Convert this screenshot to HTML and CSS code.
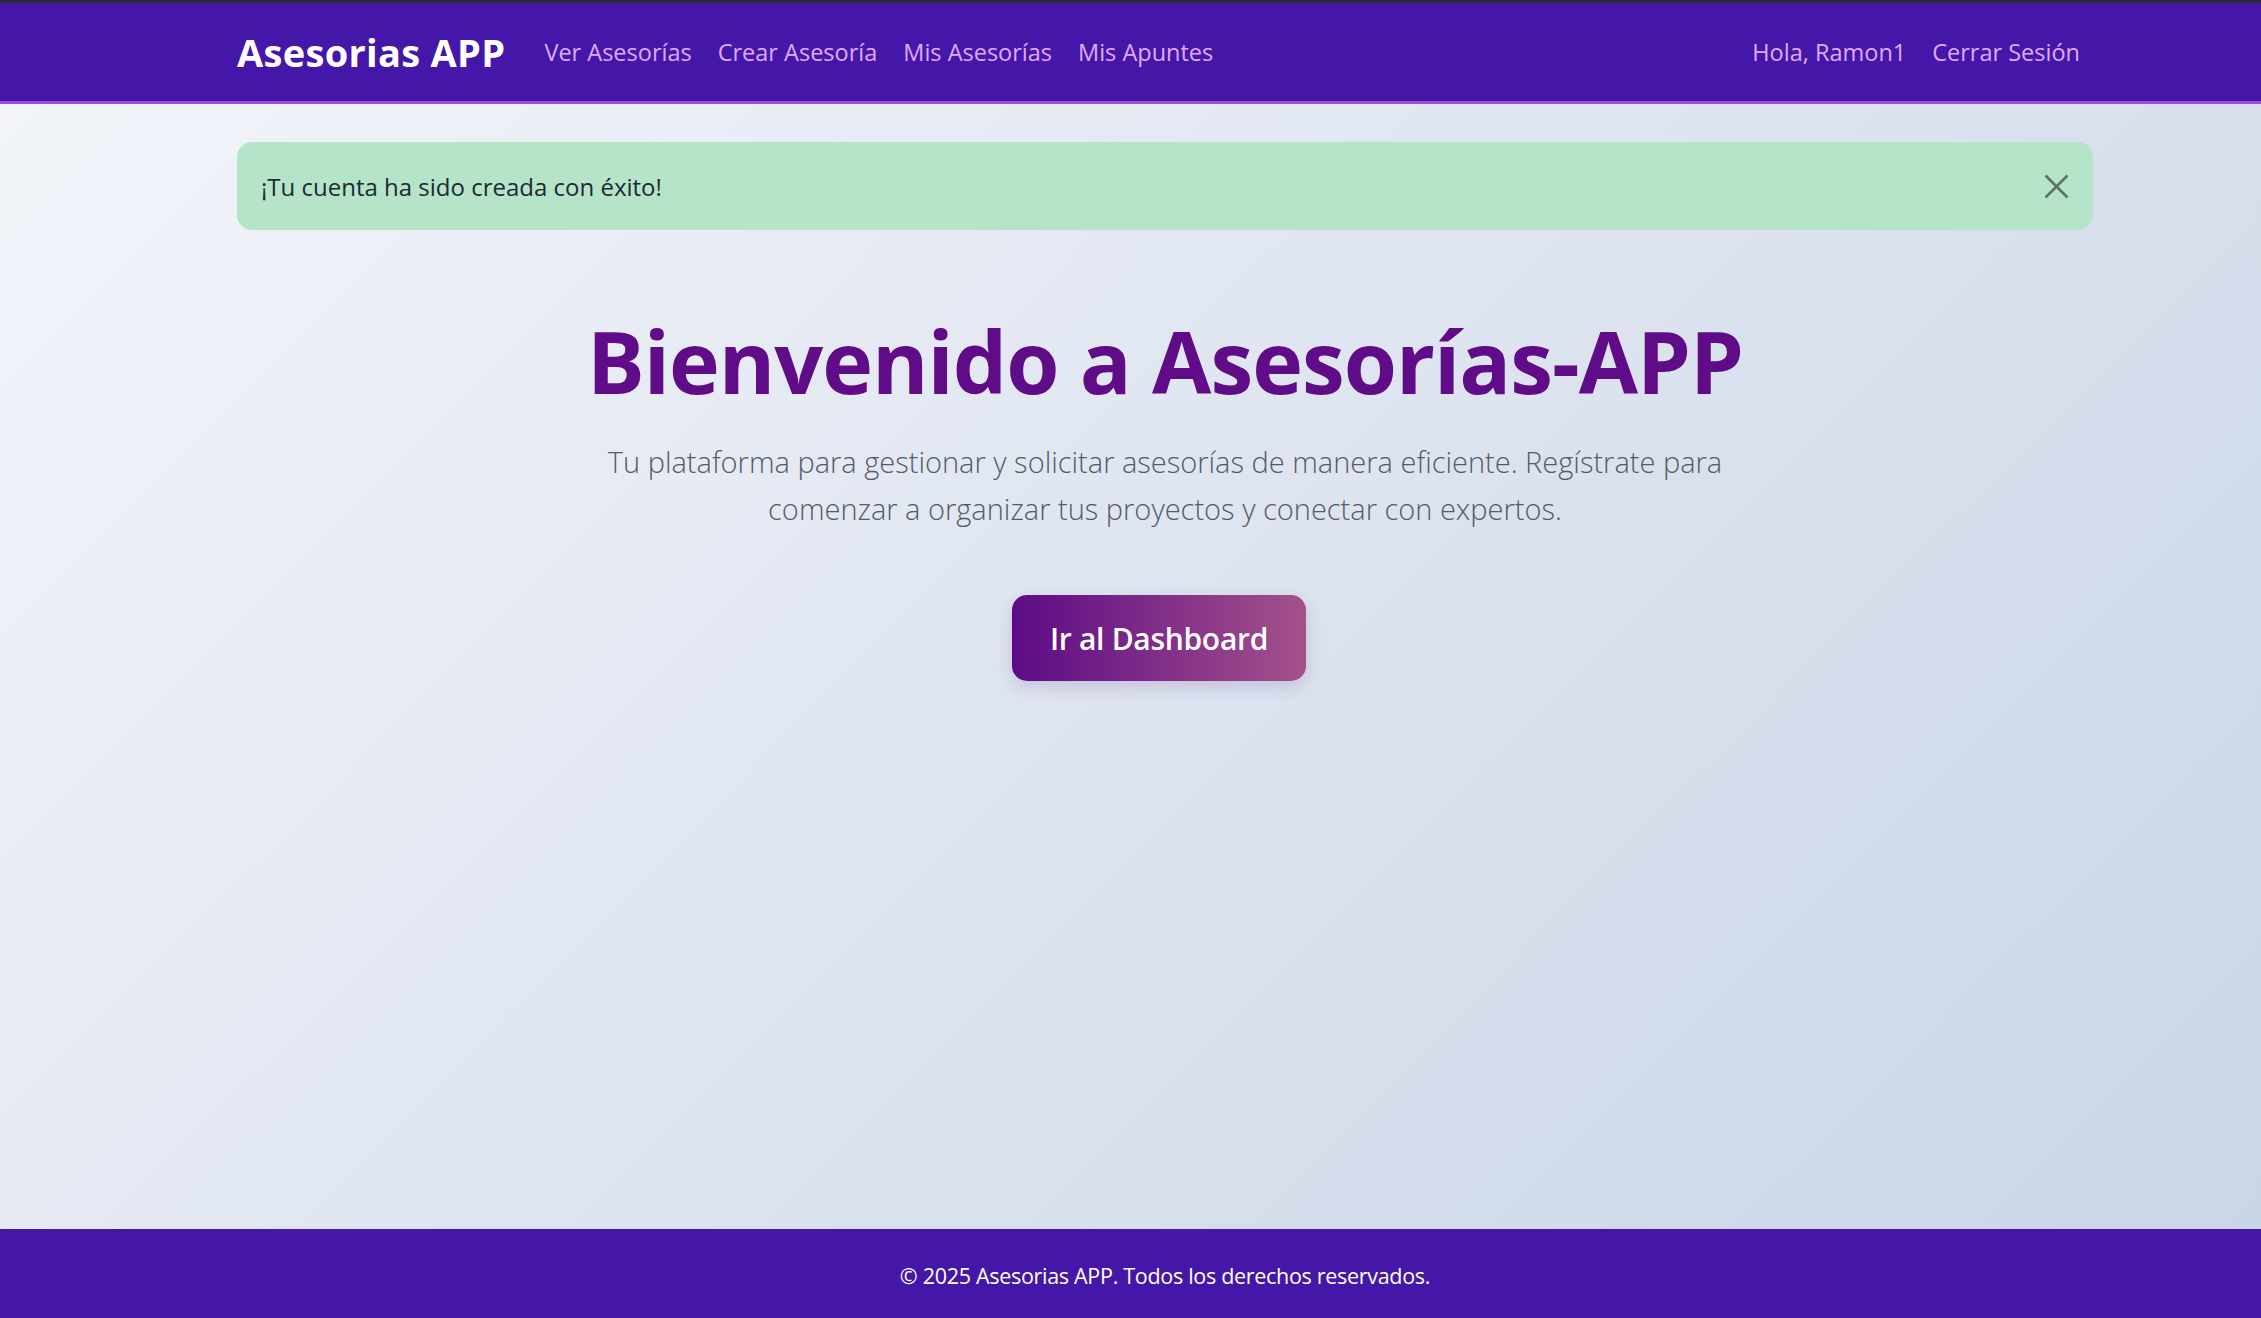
FILE: index.html
```html
<!DOCTYPE html>
<html lang="es">
<head>
<meta charset="utf-8">
<title>Asesorias APP</title>
<link rel="stylesheet" href="styles.css">
</head>
<body>
<header class="navbar">
  <div class="shift">
    <div class="container nav-inner">
      <a class="brand" href="#">Asesorias APP</a>
      <nav class="nav-links">
        <a class="nav-link" href="#">Ver Asesorías</a>
        <a class="nav-link" href="#">Crear Asesoría</a>
        <a class="nav-link" href="#">Mis Asesorías</a>
        <a class="nav-link" href="#">Mis Apuntes</a>
      </nav>
      <nav class="nav-links nav-right">
        <span class="nav-link">Hola, Ramon1</span>
        <a class="nav-link" href="#">Cerrar Sesión</a>
      </nav>
    </div>
  </div>
</header>
<main class="main shift">
  <div class="container">
    <div class="alert">
      <span>¡Tu cuenta ha sido creada con éxito!</span>
      <button class="close" aria-label="Cerrar">
        <svg width="25" height="25" viewBox="0 0 25 25"><path d="M1.5 1.5L23.5 23.5M23.5 1.5L1.5 23.5" stroke="currentColor" stroke-width="2.6" fill="none"/></svg>
      </button>
    </div>
    <section class="hero">
      <h1 class="title">Bienvenido a Asesorías-APP</h1>
      <p class="lead">Tu plataforma para gestionar y solicitar asesorías de manera eficiente. Regístrate para<br>comenzar a organizar tus proyectos y conectar con expertos.</p>
      <a class="btn" href="#">Ir al Dashboard</a>
    </section>
  </div>
</main>
<footer class="footer shift">
  <div class="container footer-inner">© 2025 Asesorias APP. Todos los derechos reservados.</div>
</footer>
</body>
</html>
```
FILE: styles.css
```css
html, body { height: 100%; }
body {
  margin: 0;
  min-height: 100vh;
  display: flex;
  flex-direction: column;
  font-family: "Open Sans", "Noto Sans", sans-serif;
  background: linear-gradient(135deg, #f3f5fa 0%, #c9d4e6 100%);
  background-attachment: fixed;
  color: #212529;
}
.shift { padding-left: 69px; }
.container { width: 1856px; margin-left: auto; margin-right: auto; box-sizing: border-box; }

.navbar {
  background: #4417a8;
  border-top: 3px solid #2c2a36;
  border-bottom: 3px solid #9d4edd;
}
.nav-inner {
  height: 98px;
  display: flex;
  align-items: center;
}
.brand {
  color: #fff;
  text-decoration: none;
  font-weight: 700;
  font-size: 38px;
  letter-spacing: 0.3px;
  margin-right: 26px;
}
.nav-links { display: flex; align-items: center; }
.nav-right { margin-left: auto; }
.nav-link {
  color: #e0aaff;
  text-decoration: none;
  font-size: 23.5px;
  padding: 0 13px;
}

.main { flex: 1; }
.alert {
  margin-top: 38px;
  height: 88px;
  box-sizing: border-box;
  padding: 0 24px;
  background: #b5e4c8;
  border-radius: 15px;
  display: flex;
  align-items: center;
  justify-content: space-between;
  font-size: 24px;
  color: #1d2a33;
}
.close {
  background: none;
  border: 0;
  padding: 0;
  color: #5e7365;
  display: flex;
}

.hero { text-align: center; }
.title {
  margin: 77px 0 0;
  font-size: 86px;
  line-height: 108px;
  font-weight: 700;
  color: #600b88;
  letter-spacing: -1px;
}
.lead {
  margin: 23px 0 0;
  font-size: 29px;
  line-height: 47px;
  font-weight: 300;
  color: #555b67;
}
.btn {
  display: inline-flex;
  align-items: center;
  justify-content: center;
  margin-top: 63px;
  margin-right: 12px;
  width: 294px;
  height: 86px;
  box-sizing: border-box;
  border-radius: 15px;
  background: linear-gradient(to right, #5c0b86, #a5518a);
  color: #fff;
  text-decoration: none;
  font-size: 30px;
  font-weight: 600;
  letter-spacing: -0.3px;
  box-shadow: 0 6px 18px rgba(90, 40, 130, 0.18);
}

.footer { background: #4417a8; }
.footer-inner {
  padding: 29px 0 25px;
  text-align: center;
  color: #fff;
  font-size: 21.5px;
  line-height: 35px;
  letter-spacing: -0.3px;
}
```
